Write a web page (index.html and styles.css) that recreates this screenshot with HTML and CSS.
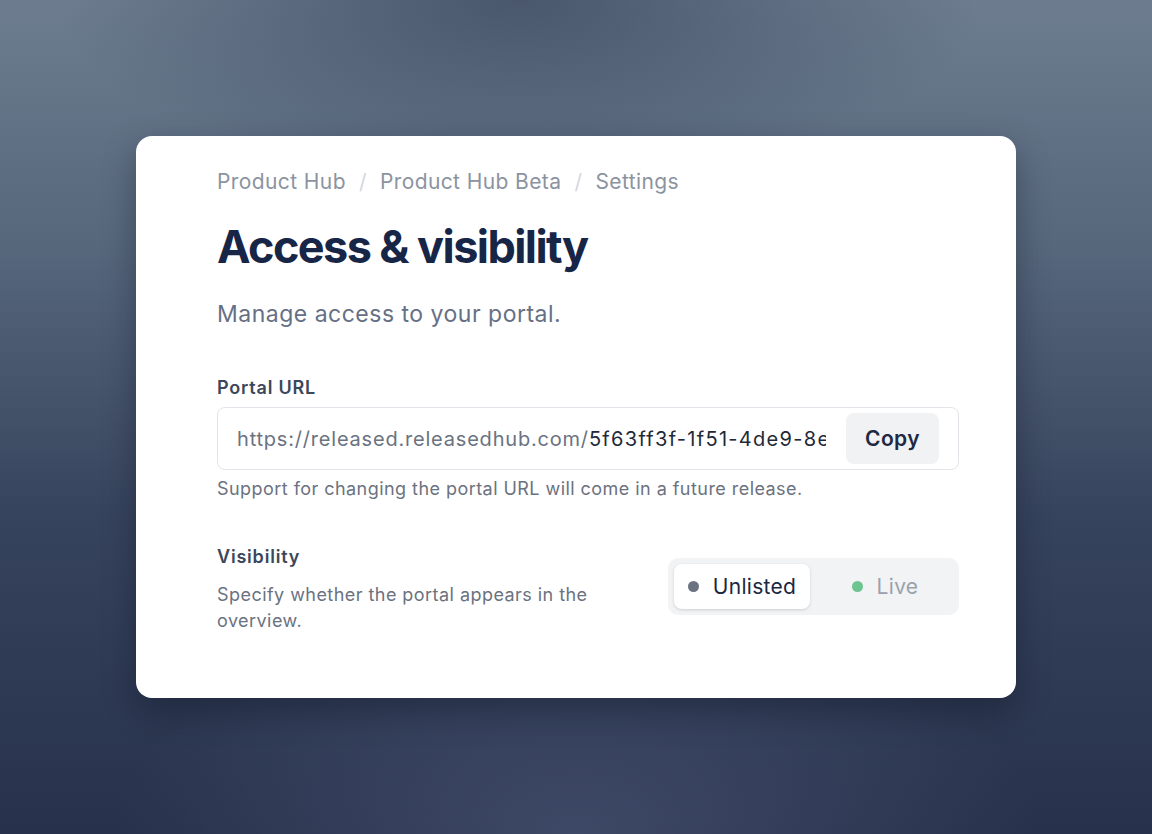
FILE: index.html
```html
<!DOCTYPE html>
<html lang="en">
<head>
  <meta charset="UTF-8">
  <meta name="viewport" content="width=device-width, initial-scale=1.0">
  <title>Access &amp; visibility</title>
  <link rel="stylesheet" href="styles.css">
</head>
<body>
  <div class="card">
    <!-- breadcrumb -->
    <nav class="crumbs">
      <span>Product Hub</span>
      <span class="sep">/</span>
      <span>Product Hub Beta</span>
      <span class="sep">/</span>
      <span>Settings</span>
    </nav>

    <h1>Access &amp; visibility</h1>
    <p class="lead">Manage access to your portal.</p>

    <div class="field">
      <label class="label">Portal URL</label>
      <div class="url-box">
        <span class="url-text"><span class="url-base">https://released.releasedhub.com/</span><span class="url-id">5f63ff3f-1f51-4de9-8e</span></span>
        <button class="copy-btn">Copy</button>
      </div>
      <p class="hint">Support for changing the portal URL will come in a future release.</p>
    </div>

    <div class="vis-row">
      <div class="vis-info">
        <div class="label">Visibility</div>
        <p class="hint vis-desc">Specify whether the portal appears in the overview.</p>
      </div>
      <div class="toggle">
        <div class="seg active"><span class="dot grey"></span>Unlisted</div>
        <div class="seg"><span class="dot green"></span>Live</div>
      </div>
    </div>
  </div>
</body>
</html>
```

FILE: styles.css
```css
* {
  box-sizing: border-box;
}

body {
  font-family: Inter, "Noto Sans", Arial, sans-serif;
  margin: 0;
  height: 100vh;
  display: flex;
  justify-content: center;
  align-items: center;
  background:
    radial-gradient(ellipse 40% 28% at 50% 100%, rgba(80, 92, 124, 0.55), transparent),
    radial-gradient(ellipse 40% 22% at 45% 0%, rgba(50, 62, 86, 0.6), transparent),
    linear-gradient(180deg, #6d7d8f 0%, #56667b 30%, #36435d 62%, #27314b 100%);
}

.card {
  width: 880px;
  height: 562px;
  background: #fff;
  border-radius: 16px;
  box-shadow: 0 12px 32px rgba(10, 15, 30, 0.35);
  padding: 32px 57px 0 81px;
}

.crumbs {
  display: flex;
  gap: 13px;
  font-size: 21px;
  letter-spacing: 0.4px;
  line-height: 28px;
  color: #8b93a1;
}

.crumbs .sep {
  color: #d3d7dd;
}

h1 {
  margin: 23px 0 0;
  font-size: 45px;
  line-height: 56px;
  font-weight: 700;
  letter-spacing: -0.035em;
  color: #172647;
}

.lead {
  margin: 23px 0 0;
  font-size: 23px;
  letter-spacing: 0.5px;
  line-height: 32px;
  color: #667085;
}

.field {
  margin-top: 46px;
}

.label {
  display: block;
  font-size: 18px;
  line-height: 24px;
  font-weight: 600;
  letter-spacing: 0.8px;
  color: #3c4759;
}

.url-box {
  margin-top: 7px;
  height: 63px;
  border: 1px solid #e1e4e8;
  border-radius: 8px;
  display: flex;
  align-items: center;
  padding: 0 19px 0 19px;
}

.url-text {
  flex: 1;
  min-width: 0;
  overflow: hidden;
  white-space: nowrap;
  font-size: 20px;
  letter-spacing: 0.8px;
  color: #1f2937;
  margin-right: 20px;
}

.url-base {
  color: #6b7280;
}

.url-id {
  letter-spacing: 1.3px;
}

.copy-btn {
  width: 93px;
  height: 51px;
  border: none;
  border-radius: 8px;
  background: #f1f2f4;
  font-family: inherit;
  font-size: 21px;
  letter-spacing: 0.4px;
  font-weight: 600;
  color: #1e2a44;
}

.hint {
  margin: 7px 0 0;
  font-size: 18px;
  letter-spacing: 0.45px;
  line-height: 24px;
  color: #6b7280;
}

.vis-row {
  margin-top: 44px;
  display: flex;
  justify-content: space-between;
  align-items: flex-start;
}

.vis-info {
  width: 400px;
}

.vis-desc {
  margin-top: 13px;
  line-height: 26px;
}

.toggle {
  margin-top: 13px;
  width: 291px;
  height: 57px;
  padding: 6px;
  border-radius: 10px;
  background: #f1f3f5;
  display: flex;
  gap: 7px;
}

.seg {
  flex: 1;
  display: flex;
  align-items: center;
  justify-content: center;
  gap: 14px;
  border-radius: 8px;
  font-size: 21px;
  letter-spacing: 0.3px;
  color: #9aa1ad;
}

.seg.active {
  background: #fff;
  color: #1b2740;
  box-shadow: 0 1px 3px rgba(0, 0, 0, 0.15);
}

.dot {
  width: 11px;
  height: 11px;
  border-radius: 50%;
}

.dot.grey {
  background: #6b7280;
}

.dot.green {
  background: #6cc48e;
}
```
